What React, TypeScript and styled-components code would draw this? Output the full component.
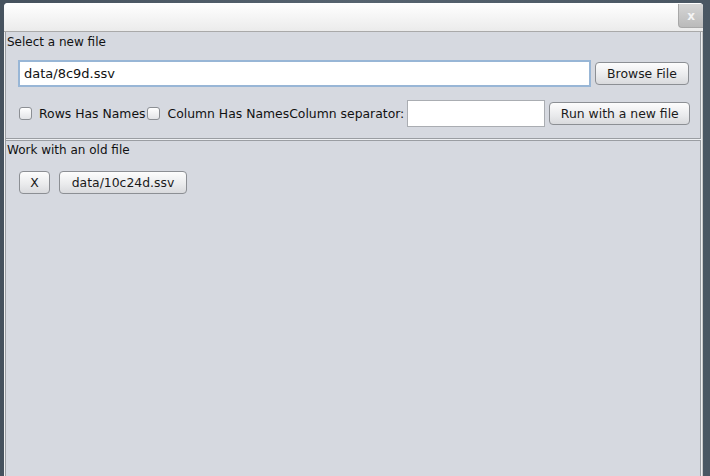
import React from "react";
import styled, { createGlobalStyle } from "styled-components";

const Global = createGlobalStyle`
  html, body { margin: 0; padding: 0; height: 100%; }
  body {
    background: #4f5c68;
    font-family: "DejaVu Sans", "Liberation Sans", sans-serif;
    font-size: 12px;
    overflow: hidden;
  }
  #root { height: 100%; }
`;

const Desktop = styled.div`
  height: 476px;
  padding: 3px 7px 0 4px;
  box-sizing: border-box;
  background: linear-gradient(90deg, #46525e 0%, #56636f 50%, #4a5763 100%);
`;

const Window = styled.div`
  height: 473px;
  display: flex;
  flex-direction: column;
  background: #f0f0f0;
  border-radius: 4px 4px 0 0;
  overflow: hidden;
`;

const TitleBar = styled.div`
  height: 28px;
  flex: none;
  display: flex;
  justify-content: flex-end;
  background: linear-gradient(#ffffff, #ebebeb);
  border-bottom: 1px solid #a9a9a9;
`;

const CloseButton = styled.div`
  width: 24px;
  height: 23px;
  margin-top: 1px;
  border-radius: 0 0 0 4px;
  background: linear-gradient(#d6d6d6, #bababa);
  border-left: 1px solid #a8a8a8;
  border-bottom: 1px solid #a8a8a8;
  display: flex;
  align-items: center;
  justify-content: center;
  color: #f4f4f4;
  font-weight: bold;
  font-size: 12px;
`;

const Body = styled.div`
  flex: 1;
  display: flex;
  flex-direction: column;
  background: #d6d9e0;
  border-left: 1px solid #9a9da2;
  margin-left: 1px;
  border-right: 1px solid #c8c8c8;
`;

const Wrap = styled.div`
  display: flex;
  flex-direction: column;
  background: #eef0f3;
  flex: 1;
  gap: 1px;
`;

const Section = styled.div<{ $grow?: boolean; $top?: boolean }>`
  display: flex;
  flex-direction: column;
  padding: ${(p) => (p.$top ? "3px" : "2px")} 0 0 1px;
  flex: ${(p) => (p.$grow ? 1 : "none")};
  height: ${(p) => (p.$grow ? "auto" : "107px")};
  box-sizing: border-box;
  border-right: 1px solid #9a9da2;
  border-bottom: ${(p) => (p.$top ? "1px solid #9a9da2" : "none")};
  border-top: ${(p) => (p.$top ? "none" : "1px solid #9a9da2")};
  margin-right: 1px;
  background: #d6d9e0;
`;

const Label = styled.div`
  color: #111;
  line-height: 14px;
  height: 14px;
`;

const Row = styled.div<{ $mt: number; $pl: number }>`
  display: flex;
  align-items: center;
  margin-top: ${(p) => p.$mt}px;
  padding-left: ${(p) => p.$pl}px;
  padding-right: 11px;
`;

const Field = styled.div<{ $focused?: boolean; $w?: number; $ml?: number }>`
  height: 27px;
  box-sizing: border-box;
  background: #fff;
  border: ${(p) => (p.$focused ? "2px solid #98b6d6" : "1px solid #aaadb2")};
  ${(p) => (p.$w ? `width: ${p.$w}px; flex: none;` : "flex: 1;")}
  margin-left: ${(p) => p.$ml ?? 0}px;
  display: flex;
  align-items: center;
  padding-left: ${(p) => (p.$focused ? "4px" : "5px")};
  font-size: 13px;
  color: #111;
`;

const Button = styled.div<{ $w: number; $ml: number }>`
  width: ${(p) => p.$w}px;
  margin-left: ${(p) => p.$ml}px;
  height: 23px;
  flex: none;
  box-sizing: border-box;
  border: 1px solid #8c8f94;
  border-radius: 4px;
  background: linear-gradient(#fdfdfd, #e9eaec 60%, #d9dadd);
  display: flex;
  align-items: center;
  justify-content: center;
  color: #1a1a1a;
  font-size: 12.4px;
`;

const Check = styled.div<{ $ml: number }>`
  width: 13px;
  height: 13px;
  box-sizing: border-box;
  border: 1px solid #8c8f94;
  border-radius: 3px;
  background: linear-gradient(#ffffff, #e3e4e7);
  margin-left: ${(p) => p.$ml}px;
  flex: none;
`;

const CheckText = styled.span<{ $ml: number }>`
  margin-left: ${(p) => p.$ml}px;
  font-size: 12.4px;
  color: #111;
  white-space: nowrap;
`;

export default function App() {
  return (
    <>
      <Global />
      <Desktop>
        <Window>
          <TitleBar>
            <CloseButton>x</CloseButton>
          </TitleBar>
          <Body>
            <Wrap>
              <Section $top>
                <Label>Select a new file</Label>
                <Row $mt={11} $pl={11}>
                  <Field $focused>data/8c9d.ssv</Field>
                  <Button $w={94} $ml={4}>Browse File</Button>
                </Row>
                <Row $mt={13} $pl={12}>
                  <Check $ml={0} />
                  <CheckText $ml={7}>Rows Has Names</CheckText>
                  <Check $ml={2} />
                  <CheckText $ml={7}>Column Has NamesColumn separator:</CheckText>
                  <Field $w={138} $ml={3} />
                  <Button $w={141} $ml={4}>Run with a new file</Button>
                </Row>
              </Section>
              <Section $grow>
                <Label>Work with an old file</Label>
                <Row $mt={14} $pl={12}>
                  <Button $w={31} $ml={0}>X</Button>
                  <Button $w={128} $ml={9}>data/10c24d.ssv</Button>
                </Row>
              </Section>
            </Wrap>
          </Body>
        </Window>
      </Desktop>
    </>
  );
}
